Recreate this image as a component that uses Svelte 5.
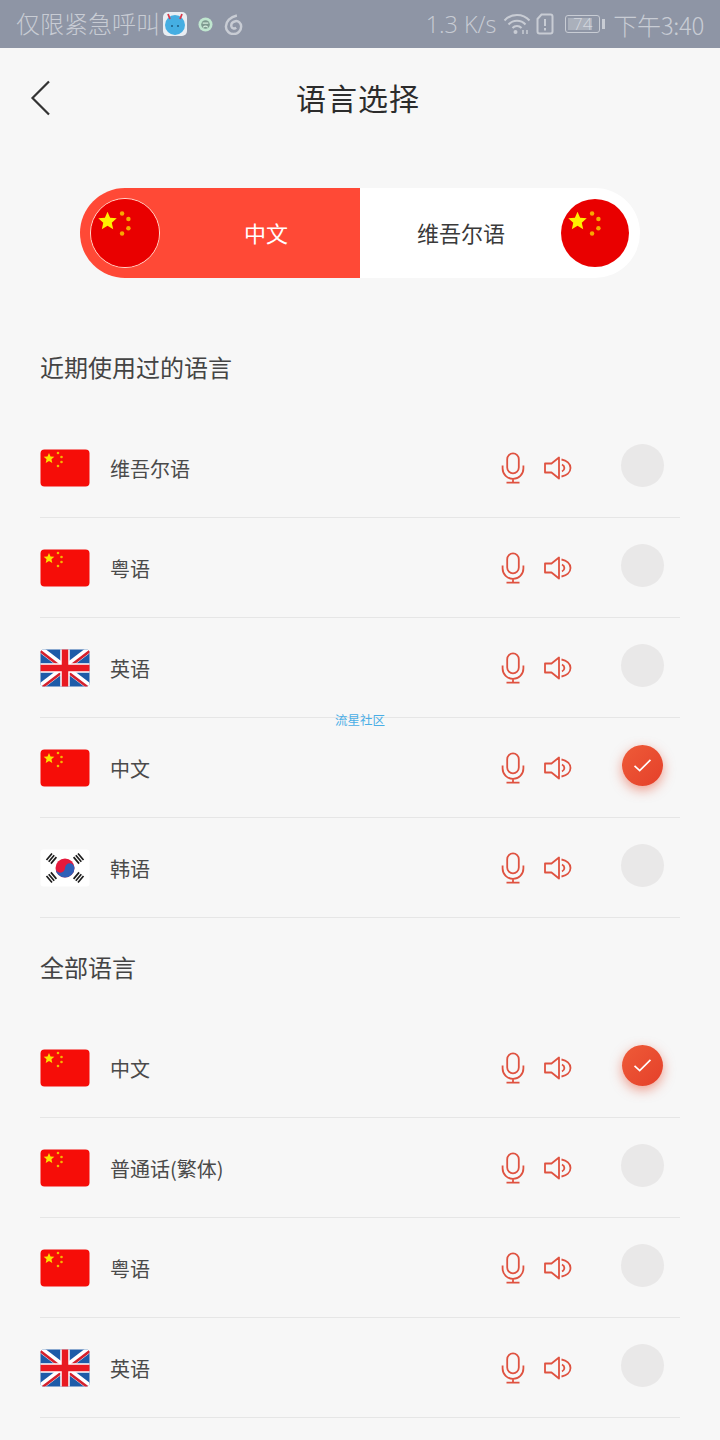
<script>
  const recent = [
    { flag: 'cn', name: '维吾尔语' },
    { flag: 'cn', name: '粤语' },
    { flag: 'uk', name: '英语' },
    { flag: 'cn', name: '中文', on: true },
    { flag: 'kr', name: '韩语' }
  ];
  const all = [
    { flag: 'cn', name: '中文', on: true },
    { flag: 'cn', name: '普通话(繁体)' },
    { flag: 'cn', name: '粤语' },
    { flag: 'uk', name: '英语' }
  ];
  function star(cx, cy, r) {
    const pts = [];
    for (let i = 0; i < 10; i++) {
      const rad = i % 2 ? r * 0.46 : r;
      const a = -Math.PI / 2 + (i * Math.PI) / 5;
      pts.push(`${(cx + rad * Math.cos(a)).toFixed(2)},${(cy + rad * Math.sin(a)).toFixed(2)}`);
    }
    return pts.join(' ');
  }
</script>

{#snippet cnFlag()}
  <svg class="flag" viewBox="0 0 50 38">
    <rect x="0.5" y="0.5" width="49" height="37" rx="4" fill="#f60d08" />
    <polygon points={star(9, 9.5, 5.6)} fill="#fbe000" />
    <circle cx="18" cy="4" r="1.3" fill="#f5b800" />
    <circle cx="21.5" cy="8" r="1.3" fill="#f5b800" />
    <circle cx="21.5" cy="13" r="1.3" fill="#f5b800" />
    <circle cx="18" cy="17" r="1.3" fill="#f5b800" />
  </svg>
{/snippet}

{#snippet ukFlag()}
  <svg class="flag" viewBox="0 0 50 38">
    <defs><clipPath id="ukclip"><rect x="0.5" y="0.5" width="49" height="37" rx="3" /></clipPath></defs>
    <g clip-path="url(#ukclip)">
      <rect width="50" height="38" fill="#1d5ba8" />
      <path d="M0 0L50 38M50 0L0 38" stroke="#fff" stroke-width="6.500" />
      <path d="M0 0L25 19M50 38L25 19" stroke="#d4202c" stroke-width="2.600" transform="translate(-1 1.200)" />
      <path d="M50 0L25 19M0 38L25 19" stroke="#d4202c" stroke-width="2.600" transform="translate(1 1.200)" />
      <path d="M25 0V38M0 19H50" stroke="#fff" stroke-width="9.500" />
      <path d="M25 0V38M0 19H50" stroke="#e81a22" stroke-width="6.500" />
    </g>
  </svg>
{/snippet}

{#snippet krFlag()}
  <svg class="flag" viewBox="0 0 50 38">
    <rect x="0.5" y="0.5" width="49" height="37" rx="3" fill="#fff" />
    <circle cx="25" cy="19" r="9.500" fill="#e5193c" />
    <path d="M15.500 19a4.750 4.750 0 0 0 9.500 0a4.750 4.750 0 0 1 9.500 0a9.500 9.500 0 0 1 -19 0z" fill="#2f5fb7" />
    <g stroke="#1c1c1c" stroke-width="1.700">
      <path d="M6.500 11L12 4.500M8.700 12.800L14.200 6.300M10.900 14.600L16.400 8.100" />
      <path d="M38 4.500L43.500 11M35.800 6.300L41.300 12.800M33.600 8.100L39.100 14.600" />
      <path d="M6.500 27L12 33.500M8.700 25.200L14.200 31.700M10.900 23.400L16.400 29.900" />
      <path d="M38 33.500L43.500 27M35.800 31.700L41.300 25.200M33.600 29.900L39.100 23.400" />
    </g>
  </svg>
{/snippet}

{#snippet bigFlag()}
  <svg class="round-flag" viewBox="0 0 70 70">
    <circle cx="35" cy="35" r="35" fill="#e90000" />
    <polygon points={star(17, 23, 10)} fill="#fff000" />
    <circle cx="32" cy="15" r="2.300" fill="#f7a800" />
    <circle cx="38.500" cy="20.500" r="2.300" fill="#f7a800" />
    <circle cx="38.500" cy="30" r="2.300" fill="#f7a800" />
    <circle cx="32" cy="35.500" r="2.300" fill="#f7a800" />
  </svg>
{/snippet}

{#snippet row(item)}
  <li class="row">
    {#if item.flag === 'cn'}{@render cnFlag()}{:else if item.flag === 'uk'}{@render ukFlag()}{:else}{@render krFlag()}{/if}
    <span class="name">{item.name}</span>
    <svg class="mic" viewBox="0 0 24 32" fill="none" stroke="#df5240" stroke-width="1.800">
      <rect x="6.200" y="1.400" width="11.600" height="20" rx="5.800" />
      <path d="M1.600 13.500v3a10.400 10.400 0 0 0 20.800 0v-3M12 27v3.600M5.500 30.600h13" />
    </svg>
    <svg class="spk" viewBox="0 0 30 24" fill="none" stroke="#df5240" stroke-width="1.800" stroke-linejoin="round">
      <path d="M2 7.500h6.500L16 1.500v21l-7.500-6H2z" />
      <path d="M19 8.500c1.500.8 2.400 2.100 2.400 3.500s-.9 2.700-2.400 3.500" />
      <path d="M18.500 3.500c5 1 9 4.200 9 8.500s-4 7.500-9 8.500" />
    </svg>
    {#if item.on}
      <span class="check on">
        <svg viewBox="0 0 20 16" fill="none" stroke="#fff" stroke-width="1.800"><path d="M1.500 8.500l5.500 5L18.500 2" /></svg>
      </span>
    {:else}
      <span class="check"></span>
    {/if}
  </li>
{/snippet}

<div class="page">
  <header class="status">
    <span class="s-text">仅限紧急呼叫</span>
    <svg class="app" viewBox="0 0 24 24">
      <rect width="24" height="24" rx="5" fill="#e9eef3" />
      <circle cx="12" cy="13" r="10" fill="#45aee2" />
      <path d="M5 2l2 5M19 2l-2 5" stroke="#d8394a" stroke-width="1.800" />
      <circle cx="9" cy="14" r="1" fill="#1d5a80" /><circle cx="15" cy="14" r="1" fill="#1d5a80" />
    </svg>
    <svg class="face" viewBox="0 0 16 16">
      <circle cx="8" cy="8" r="7.500" fill="#bfe6cf" /><circle cx="8" cy="8" r="4.600" fill="#7d9a8f" /><path d="M5 6.500h6M5.500 11c1.500-1.500 3.500-1.500 5 0" stroke="#d6eee0" stroke-width="1.200" fill="none" />
    </svg>
    <svg class="swirl" viewBox="0 0 22 22" fill="none" stroke="#c8ccd4" stroke-width="2.600">
      <path d="M13.500 1.500C6.500 3 2 8 2 13a8 8 0 1 0 16 0c0-3.500-3-6-6-5.500s-4.800 2.500-4.300 5.300c.5 2.200 3 3.200 5.100 1.700" />
    </svg>
    <span class="spacer"></span>
    <span class="s-speed">1.3 K/s</span>
    <svg class="wifi" viewBox="0 0 28 22" fill="none" stroke="#c8ccd4" stroke-width="2">
      <path d="M1.500 7.500a17 17 0 0 1 25 0M5.500 11.500a11.500 11.500 0 0 1 17 0M9.500 15a6 6 0 0 1 9 0" />
      <circle cx="12.500" cy="19" r="2" fill="#c8ccd4" stroke="none" />
      <path d="M20 17v4M24 17v4" stroke-width="1.500" />
    </svg>
    <svg class="sim" viewBox="0 0 18 22" fill="none" stroke="#c8ccd4" stroke-width="2">
      <path d="M5.500 1.500h9a2 2 0 0 1 2 2v15a2 2 0 0 1-2 2h-11a2 2 0 0 1-2-2V6z" />
      <path d="M9 6v7M9 15v2.500" />
    </svg>
    <span class="battery"><span class="level"></span><span class="b-num">74</span></span>
    <span class="nub"></span>
    <span class="s-time">下午3:40</span>
  </header>

  <div class="nav">
    <svg class="back" viewBox="0 0 22 36" fill="none" stroke="#333" stroke-width="2.200"><path d="M19 1.500L2.500 18 19 34.500" /></svg>
    <h1>语言选择</h1>
  </div>

  <div class="switcher">
    <div class="side left">
      <span class="ring">{@render bigFlag()}</span>
      <span class="side-label">中文</span>
    </div>
    <div class="side right">
      <span class="side-label">维吾尔语</span>
      <span class="plain">{@render bigFlag()}</span>
    </div>
  </div>

  <h2 class="first">近期使用过的语言</h2>
  <ul>
    {#each recent as item}{@render row(item)}{/each}
  </ul>
  <h2>全部语言</h2>
  <ul>
    {#each all as item}{@render row(item)}{/each}
  </ul>
  <span class="mark">流星社区</span>
</div>

<style>
  :global(body) { margin: 0; background: #f7f7f7; }
  .page {
    position: relative;
    width: 720px;
    height: 1440px;
    overflow: hidden;
    background: #f7f7f7;
    font-family: "Noto Sans CJK SC", "Noto Sans", sans-serif;
    color: #3a3a3a;
  }
  .status {
    height: 48px;
    background: #8e95a5;
    color: #c8ccd4;
    display: flex;
    align-items: center;
    padding: 0 16px;
    box-sizing: border-box;
    font-size: 24px;
    font-weight: 300;
  }
  .spacer { flex: 1; }
  .s-text { line-height: 46px; height: 48px; }
  .app { width: 24px; height: 24px; margin-left: 3px; }
  .face { width: 15px; height: 15px; margin-left: 11px; }
  .swirl { width: 21px; height: 21px; margin-left: 11px; }
  .s-speed { font-family: "Open Sans", sans-serif; font-size: 23.300px; font-weight: 300; }
  .wifi { width: 28px; height: 22px; margin-left: 7px; }
  .sim { width: 18px; height: 22px; margin-left: 5px; }
  .battery {
    position: relative;
    width: 35px; height: 18px;
    border: 1.500px solid #c8ccd4;
    border-radius: 3px;
    margin-left: 11px;
    padding: 2px;
    box-sizing: border-box;
    display: block;
  }
  .level { display: block; width: 24px; height: 100%; background: #aab0bb; }
  .b-num {
    position: absolute; inset: 0;
    text-align: center;
    font: 300 17px/15px "Open Sans", sans-serif;
    color: #d4d7de;
  }
  .nub { width: 3px; height: 10px; background: #c8ccd4; margin-left: 2px; margin-right: 8px; }
  .s-time { font-size: 24px; font-weight: 300; letter-spacing: -0.300px; }

  .nav {
    position: relative;
    height: 100px;
    display: flex;
    align-items: center;
    justify-content: center;
  }
  h1 { margin: 0; font-size: 30px; font-weight: 400; color: #2c2c2c; letter-spacing: 1px; transform: translate(-2px, -1px); }
  .back { position: absolute; left: 30px; top: 32px; width: 22px; height: 36px; }

  .switcher {
    display: flex;
    width: 560px;
    height: 90px;
    margin: 40px 80px 0;
    border-radius: 45px;
    overflow: hidden;
  }
  .side { width: 280px; display: flex; align-items: center; box-sizing: border-box; }
  .left { background: #ff4936; padding-left: 10px; color: #fff; }
  .right { background: #fff; padding-right: 11px; justify-content: flex-end; }
  .ring { display: block; width: 70px; height: 70px; box-sizing: border-box; border-radius: 50%; border: 1px solid #ffd9d0; }
  .plain { display: block; width: 68px; height: 68px; }
  .round-flag { display: block; width: 68px; height: 68px; }
  .side-label { font-size: 22px; line-height: 28px; padding-bottom: 2px; }
  .left .side-label { margin-left: 84px; }
  .right .side-label { margin-right: 56px; }

  h2 {
    margin: 0;
    height: 100px;
    box-sizing: border-box;
    padding: 0 0 3px 40px;
    display: flex;
    align-items: center;
    font-size: 24px;
    font-weight: 400;
    color: #444;
  }
  h2.first { margin-top: 40px; }
  ul { list-style: none; margin: 0; padding: 0; }
  .row {
    height: 100px;
    margin: 0 40px;
    box-sizing: border-box;
    border-bottom: 1px solid #e6e6e6;
    display: flex;
    align-items: center;
    padding-top: 1px;
  }
  .flag { width: 50px; height: 38px; flex: none; }
  .name { margin-left: 20px; font-size: 20px; flex: 1; color: #4a4a4a; }
  .mic { width: 24px; height: 32px; margin-right: 18px; flex: none; }
  .spk { width: 30px; height: 24px; margin: 0 47px 0 0; flex: none; }
  .check {
    width: 43px; height: 43px;
    border-radius: 50%;
    background: #e9e8e8;
    margin: 0 16px 5px 1px;
    flex: none;
    display: flex;
    align-items: center;
    justify-content: center;
  }
  .check.on {
    width: 41px; height: 41px;
    margin: 0 17px 5px 2px;
    background: linear-gradient(135deg, #ee5b38, #e5402a);
    box-shadow: 0 4px 12px rgba(229, 70, 40, 0.5);
  }
  .check svg { width: 19px; height: 15px; }
  .mark {
    position: absolute;
    left: 335px;
    top: 712px;
    font-size: 12.500px;
    line-height: 16px;
    color: #4aaee6;
  }
</style>
